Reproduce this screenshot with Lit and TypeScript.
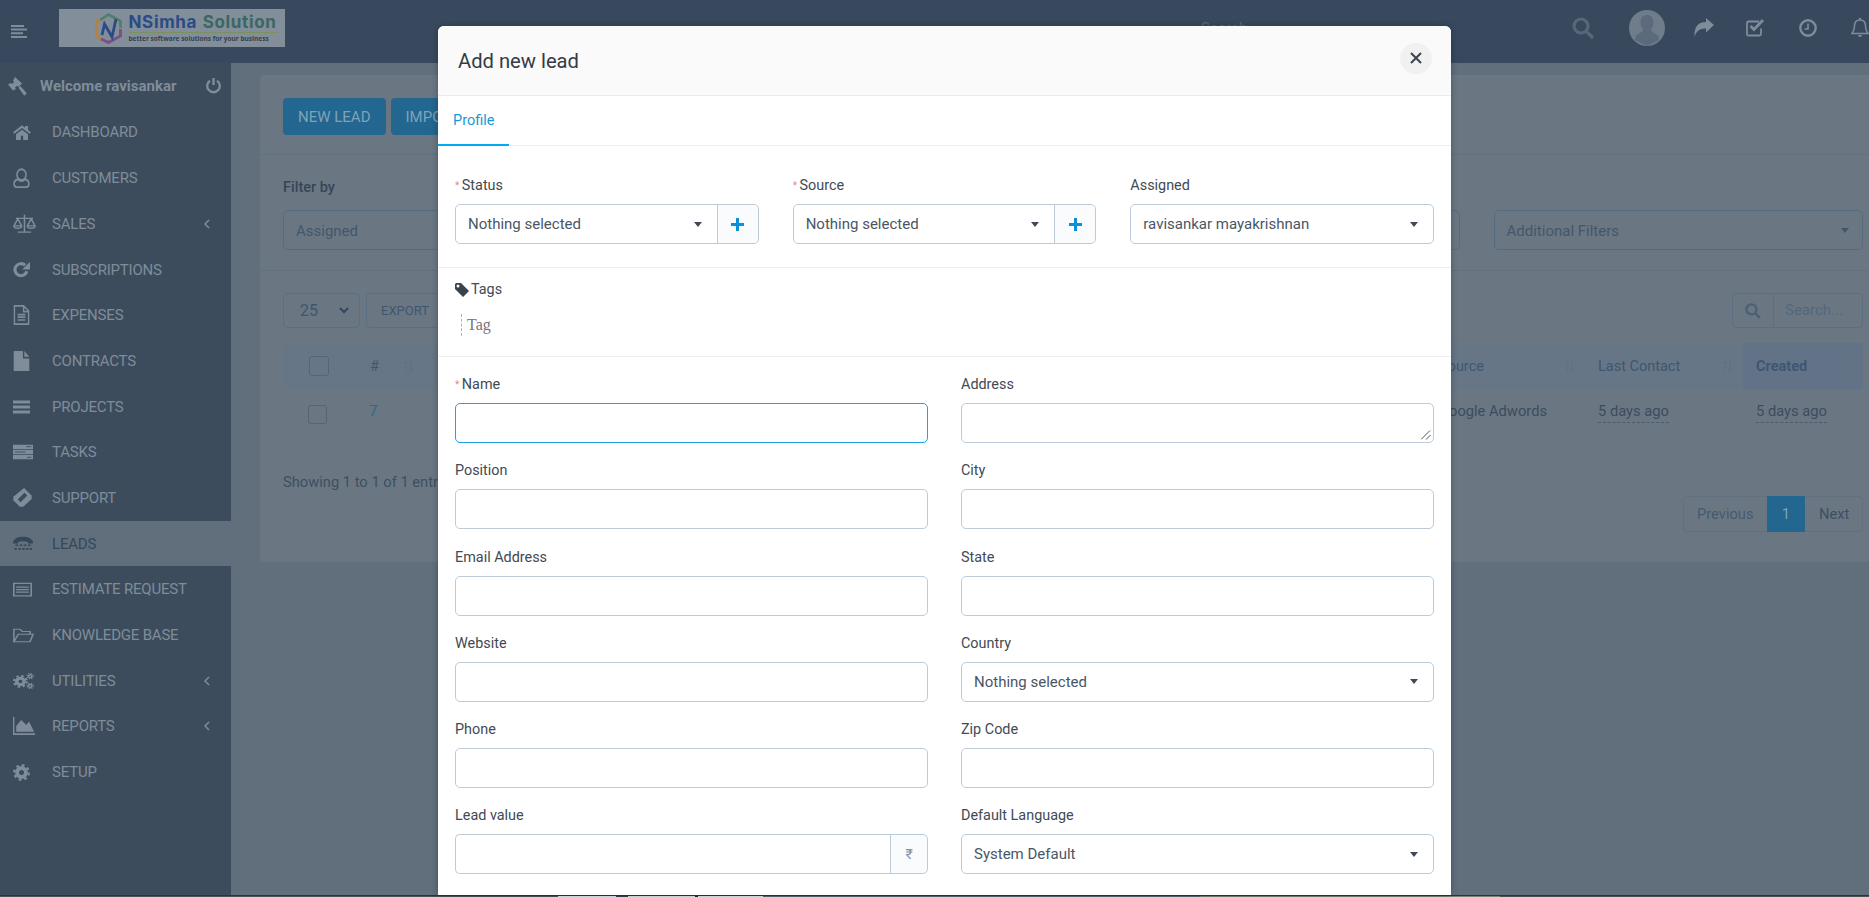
import { LitElement, html, css, svg } from 'lit';
import { customElement } from 'lit/decorators.js';

const icons: Record<string, unknown> = {
  home: svg`<path d="M12 2 0 12.500 1.800 14.800 12 6l10.200 8.800L24 12.500 20 9V3h-4v2.800zM4 15.500V24h6.500v-6.500h3V24H20v-8.500L12 8.500z"/>`,
  user: svg`<g fill="none" stroke="currentColor" stroke-width="2.200"><ellipse cx="12" cy="8" rx="6.500" ry="6.500"/><path d="M7 13.500C3 14.500 1.500 16.500 1.500 19c0 2.500 1.500 4 4 4h13c2.500 0 4-1.500 4-4 0-2.500-1.500-4.500-5.500-5.500-3 2.500-7 2.500-10 0z"/></g>`,
  scale: svg`<g fill="none" stroke="currentColor" stroke-width="1.600"><path d="M12 1v21M5 23h14M3 5.500h18M5 6 1 15c0 4 8 4 8 0zM19 6l-4 9c0 4 8 4 8 0zM1 15h8M15 15h8"/></g>`,
  repeat: svg`<path d="M19.500 14.500a8.500 8.500 0 1 1-2.400-8.500" fill="none" stroke="currentColor" stroke-width="4.400"/><path d="M24 1v11H13z"/>`,
  filetext: svg`<g fill="none" stroke="currentColor" stroke-width="2"><path d="M2 1h13l7 6v16H2zM15 1v7h7M6.500 11.500h11M6.500 14.500h11M6.500 18h11"/></g>`,
  file: svg`<path d="M1 0h13v9h9v15H1zM16 0l7 7h-7z"/>`,
  bars: svg`<path d="M0 1h24v5H0zM0 9.500h24v5H0zM0 18h24v5H0z"/>`,
  tasks: svg`<path d="M0 1h24v6.500H0zM0 8.800h24v6.500H0zM0 16.500h24V23H0z"/><path d="M16 4h6M2 12h13M17 20h5" stroke="#3c4c5d" stroke-width="1.200"/>`,
  ticket: svg`<path d="M14 0 24 10c-1 1-1 2.500 0 3.500L12.500 24c-1-1-2.500-1-3.500 0L0 15c1-1 1-2.500 0-3.500zM14.500 6 6 14.500l3.500 3.500L18 9.500z" fill-rule="evenodd"/>`,
  phone: svg`<path d="M0 9C2 3 7 1 12 1s10 2 12 8v3h-6V9.500C15 8 9 8 6 9.500V12H0zM3 13.500h3V16H3zM8 13.500h3V16H8zM13 13.500h3V16h-3zM18 13.500h3V16h-3zM1.500 19h3v3h-3zM6.500 19h3v3h-3zM11 19h3v3h-3zM15.500 19h3v3h-3zM20 19h3v3h-3z"/>`,
  list: svg`<path d="M0 1h24v22H0zM2 3v18h20V3zM4 7h16v2H4zM4 11h16v2H4zM4 15h16v2H4z" fill-rule="evenodd"/>`,
  folder: svg`<path d="M1 22V2h7l2.500 3.500h9V10M1 22h18.500L23 10H6z" fill="none" stroke="currentColor" stroke-width="1.800"/>`,
  cogs: svg`<g fill="none" stroke="currentColor"><circle cx="8.500" cy="12.500" r="4.300" stroke-width="4"/><circle cx="8.500" cy="12.500" r="7.300" stroke-width="2.600" stroke-dasharray="2.900 2.830"/><circle cx="19.700" cy="5.500" r="1.900" stroke-width="1.800"/><circle cx="19.700" cy="5.500" r="3.500" stroke-width="1.500" stroke-dasharray="1.400 1.350"/><circle cx="19.700" cy="18.500" r="1.900" stroke-width="1.800"/><circle cx="19.700" cy="18.500" r="3.500" stroke-width="1.500" stroke-dasharray="1.400 1.350"/></g>`,
  chart: svg`<path d="M0 0h1.500v21.500H24V24H0zM3.500 19.500V12L9 4l5.500 6.500 3-4.500L23 19.500z"/>`,
  cog: svg`<g fill="none" stroke="currentColor"><circle cx="12" cy="12" r="6.300" stroke-width="5.500"/><circle cx="12" cy="12" r="10.300" stroke-width="3.200" stroke-dasharray="4 4.090"/></g>`,
};

const menu = [
  { label: 'Dashboard', icon: 'home', w: 18, h: 16 },
  { label: 'Customers', icon: 'user', w: 17, h: 20 },
  { label: 'Sales', icon: 'scale', w: 23, h: 19, arrow: true },
  { label: 'Subscriptions', icon: 'repeat', w: 17, h: 17 },
  { label: 'Expenses', icon: 'filetext', w: 17, h: 20 },
  { label: 'Contracts', icon: 'file', w: 17, h: 20 },
  { label: 'Projects', icon: 'bars', w: 17, h: 14 },
  { label: 'Tasks', icon: 'tasks', w: 20, h: 16 },
  { label: 'Support', icon: 'ticket', w: 19, h: 19 },
  { label: 'Leads', icon: 'phone', w: 20, h: 15, active: true },
  { label: 'Estimate Request', icon: 'list', w: 19, h: 15 },
  { label: 'Knowledge Base', icon: 'folder', w: 21, h: 15 },
  { label: 'Utilities', icon: 'cogs', w: 21, h: 18, arrow: true },
  { label: 'Reports', icon: 'chart', w: 22, h: 18, arrow: true },
  { label: 'Setup', icon: 'cog', w: 17, h: 17 },
];

const leftFields = ['Position', 'Email Address', 'Website', 'Phone'];
const rightFields = ['City', 'State'];

@customElement('app-root')
export class AppRoot extends LitElement {
  static styles = css`
    :host {
      display: block;
      position: relative;
      width: 1869px;
      height: 897px;
      overflow: hidden;
      font-family: Roboto, "Liberation Sans", sans-serif;
      font-size: 14px;
      background: #616f7d;
    }
    * { box-sizing: border-box; }
    svg { display: block; fill: currentColor; }

    .topbar {
      display: flex;
      align-items: center;
      height: 63px;
      background: #38495e;
      color: #7f8c99;
    }
    .burger { width: 16px; height: 13px; margin-left: 11px; }
    .logo {
      display: flex;
      width: 226px;
      height: 38px;
      margin: -7px 0 0 32px;
      padding: 4px 0 0 36px;
      gap: 6.500px;
      background: #828e9a;
    }
    .logo svg { width: 27px; height: 31px; flex: none; }
    .logo-text { width: 149px; flex: none; }
    .logo-name {
      font-family: Inter, "Open Sans", sans-serif;
      font-weight: 700;
      font-size: 17px;
      letter-spacing: 0.650px;
      line-height: 18px;
      height: 20px;
      white-space: nowrap;
      color: #3b6762;
      border-bottom: 1px solid #7d8f5f;
    }
    .logo-name b { color: #2c4a85; font-weight: 700; margin-right: 1px; }
    .logo-tag {
      font-family: "Open Sans", sans-serif;
      font-weight: 700;
      font-size: 6.500px;
      line-height: 10px;
      color: #35424f;
      white-space: nowrap;
      margin-top: 1px;
    }
    .global-search { margin: -8px 0 0 916px; font-size: 15px; color: #5a6a7c; width: 50px; }
    .tools { display: flex; align-items: center; margin-left: auto; margin-top: -7px; }
    .tools .lens { width: 22px; height: 22px; color: #566779; margin-right: 35px; }
    .avatar { width: 36px; height: 36px; border-radius: 50%; background: #6f7d8a; overflow: hidden; color: #5c6b7b; margin-right: 29px; }
    .tools .share { width: 20px; height: 20px; margin-right: 32px; }
    .tools .check { width: 19px; height: 18px; margin-right: 34px; }
    .tools .clock { width: 18px; height: 18px; margin-right: 34px; }
    .tools .bell { width: 18px; height: 20px; margin-right: 0; }

    .layout { display: flex; height: 832px; }
    .sidebar { width: 231px; flex: none; background: #3c4c5d; color: #7f8c99; }
    .welcome {
      display: flex;
      align-items: center;
      height: 46.600px;
      padding: 0 10px 0 8px;
      font-weight: 700;
      font-size: 15px;
    }
    .welcome .gavel { width: 19px; height: 19px; margin-right: 13px; }
    .welcome .power { width: 15px; height: 16px; margin-left: auto; }
    .item {
      display: flex;
      align-items: center;
      height: 45.700px;
      padding-left: 13px;
      font-size: 15px;
      text-transform: uppercase;
      letter-spacing: -0.200px;
    }
    .item .ico { width: 39px; flex: none; }
    .item .chev { width: 6px; height: 10px; margin-left: auto; margin-right: 21px; }
    .item.active { background: #616f7d; color: #36475a; }

    .main { flex: 1; padding: 12px 0 0 29px; }
    .panel { background: #6a7783; border-radius: 4px 0 0 4px; color: #3c4c5e; padding-right: 6px; }
    .actions { display: flex; gap: 5px; padding: 23px 23px 19px; border-bottom: 1px solid #63707d; margin-right: -6px; }
    .btn {
      height: 37px;
      padding: 0 15px;
      display: flex;
      align-items: center;
      background: #23668f;
      color: #7da3bb;
      border-radius: 4px;
      font-size: 15px;
      text-transform: uppercase;
    }
    .filters { padding: 23px 0 20px 23px; border-bottom: 1px solid #63707d; margin-right: -6px; }
    .filters label { display: block; line-height: 20px; margin-bottom: 12px; font-weight: 500; font-size: 14.500px; color: #364555; }
    .filter-row { display: grid; grid-template-columns: repeat(4, 1fr); gap: 34px; padding-right: 6px; }
    .dim-select {
      display: flex;
      align-items: center;
      justify-content: space-between;
      height: 40px;
      padding: 1px 13px 0 12px;
      border: 1px solid #566b82;
      border-radius: 5px;
      font-size: 15px;
      color: #44566a;
    }
    .caret { width: 0; height: 0; border: 4.500px solid transparent; border-top: 5px solid currentColor; border-bottom: 0; flex: none; }
    .toolbar { display: flex; align-items: stretch; height: 35px; margin: 22px 0 15px 23px; }
    .length { width: 77px; display: flex; align-items: center; justify-content: space-between; padding: 0 10px 0 16px; border: 1px solid #5a6e84; border-radius: 4px; font-size: 16px; color: #3f556e; }
    .length svg { width: 10px; height: 7px; color: #2e4660; }
    .export { margin-left: 6px; width: 100px; display: flex; align-items: center; padding-left: 14px; border: 1px solid #5a6e84; border-radius: 4px; color: #3f556e; font-size: 13px; }
    .search { margin-left: auto; width: 131px; display: flex; border: 1px solid #5a6e84; border-radius: 4px; font-size: 15px; color: #53677c; }
    .search .s-ico { width: 41px; border-right: 1px solid #5a6e84; display: flex; align-items: center; justify-content: center; color: #4b6077; }
    .search .s-ico svg { width: 16px; height: 16px; }
    .search span { padding: 7px 0 0 11px; }
    .tbl { margin-left: 23px; display: grid; grid-template-columns: 75px 1068px 159px 158px 120px; }
    .th { height: 46px; background: #677686; color: #3e5672; display: flex; align-items: center; justify-content: space-between; padding: 0 10px 0 13px; font-size: 14.500px; }
    .th.cb { padding-left: 26px; }
    .th.sorted { background: #627387; font-weight: 700; }
    .th.hash { justify-content: flex-start; padding-left: 12px; gap: 24px; }
    .th svg { width: 11px; height: 13px; color: #627080; }
    .box { width: 20px; height: 20px; border: 1px solid #536579; border-radius: 3px; }
    .td { height: 52px; padding: 11px 13px 0; line-height: 22px; font-size: 14.700px; color: #3c4c5e; }
    .td.cb { padding: 16px 0 0 25px; }
    .td.num { color: #2b6a91; padding-left: 11px; font-size: 15px; }
    .td .ago { display: inline-block; border-bottom: 1px dashed #4a5c6e; }
    .footer { display: flex; justify-content: space-between; align-items: flex-start; margin: 31px 0 0 23px; padding-bottom: 30px; }
    .info { font-size: 14.700px; line-height: 20px; color: #3f4f5f; }
    .pager { display: flex; height: 36px; margin-top: 24px; border: 1px solid #617080; border-radius: 4px; font-size: 14.700px; color: #44566a; align-items: center; width: 180px; }
    .pager .prev { width: 83px; padding-left: 13px; color: #475a6c; }
    .pager .cur { width: 38px; height: 36px; background: #23668f; color: #7da3bb; display: flex; align-items: center; justify-content: center; }
    .pager .next { padding-left: 14px; color: #3f4f60; }

    .strip {
      height: 2px;
      background: linear-gradient(90deg, #4d5358 0 558px, #e8eef2 558px 616px, #39424a 616px 628px, #e8e8e8 628px 695px, #222 695px 698px, #ededed 698px 763px, #5d6a70 763px 1200px, #7a8377 1200px 1500px, #4a5258 1500px);
      border-top: 1px solid #2d3338;
    }

    .modal {
      position: absolute;
      left: 438px;
      top: 26px;
      width: 1013px;
      height: 869px;
      background: #fff;
      border-radius: 6px 6px 0 0;
      box-shadow: 0 0 6px rgba(20, 30, 45, 0.400);
      color: #3f4752;
    }
    .m-head {
      display: flex;
      align-items: center;
      justify-content: space-between;
      height: 70px;
      padding: 0 19px 0 20px;
      background: #fafafa;
      border-bottom: 1px solid #e9ebee;
      border-radius: 6px 6px 0 0;
    }
    .m-head h4 { margin: 0; font-size: 20.200px; font-weight: 400; color: #333c47; }
    .close { width: 32px; height: 31px; margin-top: -5px; border-radius: 50%; background: #f1f1f1; display: flex; align-items: center; justify-content: center; color: #3a434e; }
    .close svg { width: 12px; height: 12px; }
    .tabs { height: 50px; border-bottom: 1px solid #eceef1; display: flex; }
    .tab { width: 71px; height: 50px; padding: 15px 0 0 15px; line-height: 20px; font-size: 14.500px; color: #149ad9; border-bottom: 2px solid #03a9f4; }
    .sec { padding: 29px 17px 0; border-bottom: 1px solid #eceef1; }
    .sec.top { height: 122px; display: grid; grid-template-columns: repeat(3, 1fr); column-gap: 34px; align-content: start; }
    .sec.tags { height: 89px; padding-top: 12px; }
    label.lbl { display: block; line-height: 20px; padding-top: 1px; margin-bottom: 8px; font-size: 14.400px; color: #424a54; white-space: nowrap; }
    .req { color: #f0809a; font-size: 10px; margin-right: 2.500px; vertical-align: 1px; }
    .combo { display: flex; height: 40px; border: 1px solid #bdcbd9; border-radius: 5px; background: #fff; }
    .combo .val { flex: 1; display: flex; align-items: center; justify-content: space-between; padding: 0 15px 0 12px; font-size: 15px; color: #4a5666; }
    .combo .caret { color: #3f4a5a; }
    .combo .add { width: 41px; flex: none; display: flex; align-items: center; justify-content: center; border-left: 1px solid #bdcbd9; background: #f9fbfd; border-radius: 0 5px 5px 0; color: #0a8fd8; }
    .combo .add svg { width: 13px; height: 13px; }
    .tags-label { display: flex; align-items: center; gap: 2px; line-height: 20px; font-size: 14.400px; color: #424a54; }
    .tags-label svg { width: 14px; height: 14px; color: #3a424c; }
    .tag-input { margin: 14px 0 0 6px; height: 22px; border-left: 1px dashed #b0b0b0; padding-left: 5px; line-height: 22px; font-family: "Liberation Serif", serif; font-size: 16px; color: #767676; }
    .form { display: grid; grid-template-columns: 473px 473px; column-gap: 33px; padding: 17px 17px 0; }
    .col { display: grid; row-gap: 17.300px; align-content: start; }
    .field input, .field textarea {
      display: block;
      width: 100%;
      height: 40px;
      margin: 0;
      padding: 6px 12px;
      border: 1px solid #bdcbd9;
      border-radius: 5px;
      outline: none;
      background: #fff;
      font: inherit;
    }
    .field textarea { resize: none; }
    .field input.focus { border-color: #1ea1e6; }
    .field .group { display: flex; }
    .field .group input { border-radius: 5px 0 0 5px; border-right: 0; }
    .area-wrap { position: relative; }
    .grip { position: absolute; right: 3px; bottom: 3px; width: 10px; height: 10px; color: #555; }
    .rupee { width: 38px; flex: none; height: 40px; display: flex; align-items: center; justify-content: center; border: 1px solid #bdcbd9; border-radius: 0 5px 5px 0; background: #f9fbfd; color: #8290a0; font-size: 14px; }
  `;

  private caret() {
    return html`<span class="caret"></span>`;
  }

  private plusCombo(text: string) {
    return html`<div class="combo">
      <div class="val">${text}${this.caret()}</div>
      <div class="add"><svg viewBox="0 0 13 13"><path d="M5 0h3v5h5v3H8v5H5V8H0V5h5z"/></svg></div>
    </div>`;
  }

  private plainCombo(text: string) {
    return html`<div class="combo"><div class="val">${text}${this.caret()}</div></div>`;
  }

  private inputField(label: string) {
    return html`<div class="field"><label class="lbl">${label}</label><input type="text" /></div>`;
  }

  private renderTopbar() {
    return html`<div class="topbar">
      <svg class="burger" viewBox="0 0 16 13"><path d="M0 0h13v2H0zM0 3.600h16v2H0zM0 7.300h12v2H0zM0 11h16v2H0z"/></svg>
      <div class="logo">
        <svg viewBox="0 0 27 31">
          <path d="M5 7 13.500 1.500 25.500 8v7" fill="none" stroke="#4f7f6a" stroke-width="2.600"/>
          <path d="M5 7 1.500 9v14l5 3" fill="none" stroke="#b9803c" stroke-width="3"/>
          <path d="M6 26l7.500 3.500 12-6.500v-7" fill="none" stroke="#7a4f86" stroke-width="2.800"/>
          <path d="M7 22 9.500 11 17 24 21 6" fill="none" stroke="#2c4a85" stroke-width="2.800"/>
        </svg>
        <div class="logo-text">
          <div class="logo-name"><b>NSimha</b> Solution</div>
          <div class="logo-tag">better software solutions for your business</div>
        </div>
      </div>
      <div class="global-search">Search</div>
      <div class="tools">
        <svg class="lens" viewBox="0 0 22 22"><circle cx="9" cy="9" r="7" fill="none" stroke="currentColor" stroke-width="3.200"/><path d="M14 14l7 7" stroke="currentColor" stroke-width="3.400"/></svg>
        <div class="avatar"><svg viewBox="0 0 36 36"><path d="M18 5c4 0 6.500 3 6.500 7.500 0 3-1 5.500-2.500 7 0 2 2 3 5 4.500 2 1 3 3 3 6L18 36 6 30c0-3 1-5 3-6 3-1.500 5-2.500 5-4.500-1.500-1.500-2.500-4-2.500-7C11.500 8 14 5 18 5z"/></svg></div>
        <svg class="share" viewBox="0 0 20 20"><path d="M20 7 12 0v4C4 4 0 9 .5 19 2 13 6 10.500 12 10.500V14.500z"/></svg>
        <svg class="check" viewBox="0 0 19 18"><path d="M15 9.500V15a1.500 1.500 0 0 1-1.500 1.500h-11A1.500 1.500 0 0 1 1 15V4a1.500 1.500 0 0 1 1.500-1.500H13" fill="none" stroke="currentColor" stroke-width="1.800"/><path d="M4.500 7 8 10.500 17 1" fill="none" stroke="currentColor" stroke-width="2.800"/></svg>
        <svg class="clock" viewBox="0 0 18 18"><circle cx="9" cy="9" r="7.700" fill="none" stroke="currentColor" stroke-width="2.400"/><path d="M9 4.500V10H5.500" fill="none" stroke="currentColor" stroke-width="1.600"/></svg>
        <svg class="bell" viewBox="0 0 18 20"><path d="M9 2c-3.500 0-5.500 2.500-5.500 6 0 4-1 5.500-2.500 7.500h16c-1.500-2-2.500-3.500-2.500-7.500 0-3.500-2-6-5.500-6z" fill="none" stroke="currentColor" stroke-width="1.500"/><path d="M7 17h4a2 2 0 0 1-4 0zM8 0h2v2H8z"/></svg>
      </div>
    </div>`;
  }

  private renderSidebar() {
    return html`<aside class="sidebar">
      <div class="welcome">
        <svg class="gavel" viewBox="0 0 19 19"><path d="M7 0l7 6.500-3.500 3.500L9 8.800l-2 2L8 12 5 13.500 0 7.500 2.500 6l1.500 1 2-2-1-1.500zM10.500 10.800l1.800-1.800 6.500 7.300-2.500 2.500z"/></svg>
        Welcome ravisankar
        <svg class="power" viewBox="0 0 15 16"><path d="M7.500 0v7" stroke="currentColor" stroke-width="2.400" fill="none"/><path d="M4 2.700a6.300 6.300 0 1 0 7 0" fill="none" stroke="currentColor" stroke-width="2.300"/></svg>
      </div>
      ${menu.map(
        (m) => html`<div class="item ${m.active ? 'active' : ''}">
          <span class="ico"><svg viewBox="0 0 24 24" preserveAspectRatio="none" style="width:${m.w}px;height:${m.h}px">${icons[m.icon]}</svg></span>
          ${m.label}
          ${m.arrow ? html`<svg class="chev" viewBox="0 0 6 10"><path d="M5 1 1 5l4 4" fill="none" stroke="currentColor" stroke-width="1.500"/></svg>` : ''}
        </div>`,
      )}
    </aside>`;
  }

  private sortGlyph() {
    return html`<svg viewBox="0 0 11 13"><path d="M3 13V2M1 4l2-3 2 3M8 0v11M6 9l2 3 2-3" fill="none" stroke="currentColor" stroke-width="1"/></svg>`;
  }

  private renderPanel() {
    return html`<main class="main">
      <div class="panel">
        <div class="actions">
          <div class="btn">New Lead</div>
          <div class="btn">Import Leads</div>
        </div>
        <div class="filters">
          <label>Filter by</label>
          <div class="filter-row">
            <div class="dim-select">Assigned</div>
            <div class="dim-select">Status</div>
            <div class="dim-select">Source</div>
            <div class="dim-select">Additional Filters${this.caret()}</div>
          </div>
        </div>
        <div class="toolbar">
          <div class="length">25<svg viewBox="0 0 10 7"><path d="M1 1l4 4 4-4" fill="none" stroke="currentColor" stroke-width="2"/></svg></div>
          <div class="export">EXPORT</div>
          <div class="search">
            <div class="s-ico"><svg viewBox="0 0 15 15"><circle cx="6" cy="6" r="4.700" fill="none" stroke="currentColor" stroke-width="2.200"/><path d="M9.500 9.500l4.500 4.500" stroke="currentColor" stroke-width="2.400"/></svg></div>
            <span>Search...</span>
          </div>
        </div>
        <div class="tbl">
          <div class="th cb"><div class="box"></div></div>
          <div class="th hash">#${this.sortGlyph()}</div>
          <div class="th">Source${this.sortGlyph()}</div>
          <div class="th">Last Contact${this.sortGlyph()}</div>
          <div class="th sorted">Created${this.sortGlyph()}</div>
          <div class="td cb"><div class="box" style="width:19px;height:19px"></div></div>
          <div class="td num">7</div>
          <div class="td">Google Adwords</div>
          <div class="td"><span class="ago">5 days ago</span></div>
          <div class="td"><span class="ago">5 days ago</span></div>
        </div>
        <div class="footer">
          <div class="info">Showing 1 to 1 of 1 entries</div>
          <div class="pager">
            <div class="prev">Previous</div>
            <div class="cur">1</div>
            <div class="next">Next</div>
          </div>
        </div>
      </div>
    </main>`;
  }

  private renderModal() {
    return html`<div class="modal">
      <div class="m-head">
        <h4>Add new lead</h4>
        <div class="close"><svg viewBox="0 0 12 12"><path d="M1 1l10 10M11 1 1 11" stroke="currentColor" stroke-width="2" fill="none"/></svg></div>
      </div>
      <div class="tabs"><div class="tab">Profile</div></div>
      <div class="sec top">
        <div><label class="lbl"><span class="req">*</span>Status</label>${this.plusCombo('Nothing selected')}</div>
        <div><label class="lbl"><span class="req">*</span>Source</label>${this.plusCombo('Nothing selected')}</div>
        <div><label class="lbl">Assigned</label>${this.plainCombo('ravisankar mayakrishnan')}</div>
      </div>
      <div class="sec tags">
        <div class="tags-label">
          <svg viewBox="0 0 14 14"><path d="M0 1.500A1.500 1.500 0 0 1 1.500 0H6l8 8-6 6-8-8zM3 4.500a1.500 1.500 0 1 0 0-3 1.500 1.500 0 0 0 0 3z" fill-rule="evenodd"/></svg>
          Tags
        </div>
        <div class="tag-input">Tag</div>
      </div>
      <div class="form">
        <div class="col">
          <div class="field"><label class="lbl"><span class="req">*</span>Name</label><input class="focus" type="text" /></div>
          ${leftFields.map((f) => this.inputField(f))}
          <div class="field">
            <label class="lbl">Lead value</label>
            <div class="group"><input type="text" /><div class="rupee">₹</div></div>
          </div>
        </div>
        <div class="col">
          <div class="field">
            <label class="lbl">Address</label>
            <div class="area-wrap">
              <textarea></textarea>
              <svg class="grip" viewBox="0 0 10 10"><path d="M0 9.500 9 .5M5 9.500 9.500 5" stroke="currentColor" stroke-width="1" fill="none"/></svg>
            </div>
          </div>
          ${rightFields.map((f) => this.inputField(f))}
          <div class="field"><label class="lbl">Country</label>${this.plainCombo('Nothing selected')}</div>
          ${this.inputField('Zip Code')}
          <div class="field"><label class="lbl">Default Language</label>${this.plainCombo('System Default')}</div>
        </div>
      </div>
    </div>`;
  }

  render() {
    return html`
      ${this.renderTopbar()}
      <div class="layout">${this.renderSidebar()}${this.renderPanel()}</div>
      <div class="strip"></div>
      ${this.renderModal()}
    `;
  }
}
